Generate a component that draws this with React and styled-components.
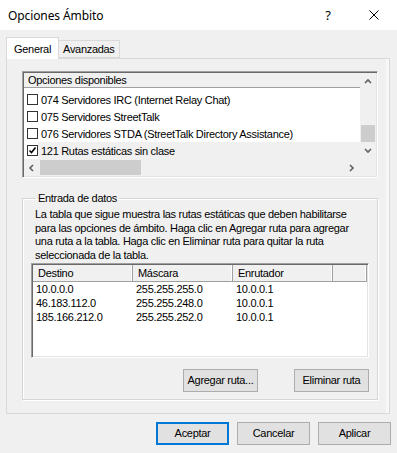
import React from 'react';
import styled, { createGlobalStyle } from 'styled-components';

const GlobalStyle = createGlobalStyle`
  html, body {
    margin: 0;
    padding: 0;
    background: #f0f0f0;
  }
  body {
    font-family: "Liberation Sans", Arial, sans-serif;
    font-size: 11px;
    letter-spacing: -0.3px;
    color: #000;
  }
`;

const Window = styled.div`
  width: 397px;
  height: 453px;
  background: #f0f0f0;
  display: flex;
  flex-direction: column;
  overflow: hidden;
`;

const TitleBar = styled.div`
  height: 30px;
  background: #fff;
  display: flex;
  align-items: center;
  justify-content: space-between;
  padding-left: 8px;
`;

const Title = styled.div`
  font-family: "Noto Sans", "Open Sans", sans-serif;
  font-size: 12px;
  letter-spacing: -0.1px;
`;

const TitleButtons = styled.div`
  display: flex;
  height: 100%;
`;

const TitleButton = styled.div`
  width: 46px;
  height: 100%;
  display: flex;
  align-items: center;
  justify-content: center;
  font-family: "Noto Sans", sans-serif;
  font-size: 13px;
`;

const Body = styled.div`
  flex: 1;
  padding: 7px 7px 0 6px;
  display: flex;
  flex-direction: column;
`;

const Tabs = styled.div`
  display: flex;
  align-items: flex-end;
  height: 21px;
  position: relative;
  z-index: 1;
`;

const Tab = styled.div`
  height: ${p => (p.$active ? '22px' : '18px')};
  padding: 0 ${p => (p.$active ? '7px' : '4px')};
  margin-bottom: ${p => (p.$active ? '-1px' : '0')};
  background: ${p => (p.$active ? '#fff' : '#f0f0f0')};
  border: 1px solid #d9d9d9;
  border-bottom: ${p => (p.$active ? 'none' : '1px solid #d9d9d9')};
  border-left: ${p => (p.$active ? '1px solid #d9d9d9' : 'none')};
  display: flex;
  align-items: center;
  box-sizing: border-box;
`;

const Panel = styled.div`
  border: 1px solid #d9d9d9;
  background: #f0f0f0;
  padding: 12px 11px 13px 15px;
  box-shadow: inset -3px 0 0 #f7f7f7;
`;

const ListBox = styled.div`
  width: 356px;
  height: 107px;
  box-sizing: border-box;
  border: 1px solid;
  border-color: #a0a0a0 #fff #fff #a0a0a0;
  box-shadow: inset 1px 1px 0 #696969, inset -1px -1px 0 #e3e3e3;
  padding: 1px;
  display: grid;
  grid-template-columns: 1fr 16px;
  grid-template-rows: 1fr 17px;
  background: #fff;
`;

const ListMain = styled.div`
  display: flex;
  flex-direction: column;
  overflow: hidden;
`;

const ListHeader = styled.div`
  height: 15px;
  border-bottom: 1px solid #a0a0a0;
  background: #f0f0f0;
  padding-left: 4px;
  display: flex;
  align-items: center;
  white-space: nowrap;
`;

const Items = styled.div`
  padding-top: 3px;
  flex: 1;
`;

const Item = styled.div`
  height: 17px;
  display: flex;
  align-items: center;
  padding-left: 3px;
  white-space: nowrap;
`;

const ItemLabel = styled.span`
  flex: 1;
  height: 100%;
  display: flex;
  align-items: center;
  padding-left: 3px;
  background: ${p => (p.$selected ? '#f0f0f0' : 'transparent')};
`;

const Check = styled.span`
  width: 11px;
  height: 11px;
  box-sizing: border-box;
  border: 1px solid #333;
  background: #fff;
  display: flex;
  align-items: center;
  justify-content: center;
  flex: none;
`;

const VScroll = styled.div`
  background: #f0f0f0;
  display: flex;
  flex-direction: column;
  align-items: center;
`;

const ScrollArrow = styled.div`
  width: 100%;
  height: 17px;
  display: flex;
  align-items: center;
  justify-content: center;
  flex: none;
`;

const VTrack = styled.div`
  flex: 1;
  width: 100%;
  display: flex;
  flex-direction: column;
  justify-content: flex-end;
`;

const VThumb = styled.div`
  height: 17px;
  background: #cdcdcd;
  margin: 0 1px;
`;

const HScroll = styled.div`
  background: #f0f0f0;
  display: flex;
  align-items: stretch;
`;

const HArrow = styled.div`
  width: 16px;
  display: flex;
  align-items: center;
  justify-content: center;
  flex: none;
`;

const HTrack = styled.div`
  flex: 1;
  display: flex;
  align-items: stretch;
  padding: 1px 0;
`;

const HThumb = styled.div`
  width: 101px;
  background: #cdcdcd;
`;

const Corner = styled.div`
  background: #f0f0f0;
`;

const GroupBox = styled.fieldset`
  margin: 14px 0 0 0;
  width: 356px;
  box-sizing: border-box;
  border: 1px solid #d5d5d5;
  border-radius: 0;
  padding: 0 8px 7px 8px;
  box-shadow: 1px 1px 0 #fff, inset 1px 1px 0 #fff;
`;

const Legend = styled.legend`
  margin-left: 5px;
  padding: 0 2px;
  line-height: 13px;
`;

const Desc = styled.div`
  margin: 3px 0 0 4px;
  line-height: 13.7px;
  white-space: nowrap;
`;

const Table = styled.div`
  margin-top: 0;
  height: 95px;
  box-sizing: border-box;
  border: 1px solid;
  border-color: #a0a0a0 #fff #fff #a0a0a0;
  box-shadow: inset 1px 1px 0 #696969, inset -1px -1px 0 #e3e3e3;
  padding: 1px;
  background: #fff;
`;

const Cols = styled.div`
  display: grid;
  grid-template-columns: 100px 100px 100px 1fr;
`;

const HeadCell = styled.div`
  height: 16px;
  background: #f0f0f0;
  border-bottom: 1px solid #a0a0a0;
  border-right: 1px solid #a0a0a0;
  box-shadow: inset -1px 0 0 #fff;
  padding-left: 5px;
  display: flex;
  align-items: center;
`;

const Cell = styled.div`
  height: 14px;
  padding-left: 3px;
  display: flex;
  align-items: center;
  white-space: nowrap;
`;

const ButtonRow = styled.div`
  display: flex;
  justify-content: flex-end;
  gap: 36px;
  margin-top: 11px;
`;

const Button = styled.div`
  width: ${p => p.$w || 75}px;
  height: 23px;
  box-sizing: border-box;
  background: #e1e1e1;
  border: ${p => (p.$default ? '2px solid #0078d7' : '1px solid #adadad')};
  display: flex;
  align-items: center;
  justify-content: center;
`;

const Footer = styled.div`
  display: flex;
  justify-content: flex-end;
  gap: 8px;
  margin-top: 8px;
  margin-right: -1px;
`;

const Chevron = ({ dir }) => {
  const pts = {
    up: '1,5 4,2 7,5',
    down: '1,2 4,5 7,2',
    left: '5,1 2,4 5,7',
    right: '2,1 5,4 2,7',
  }[dir];
  return (
    <svg width="8" height="8" viewBox="0 0 8 8">
      <polyline points={pts} fill="none" stroke="#606060" strokeWidth="1.6" />
    </svg>
  );
};

const options = [
  { label: '074 Servidores IRC (Internet Relay Chat)' },
  { label: '075 Servidores StreetTalk' },
  { label: '076 Servidores STDA (StreetTalk Directory Assistance)' },
  { label: '121 Rutas estáticas sin clase', checked: true, selected: true },
];

const routes = [
  ['10.0.0.0', '255.255.255.0', '10.0.0.1'],
  ['46.183.112.0', '255.255.248.0', '10.0.0.1'],
  ['185.166.212.0', '255.255.252.0', '10.0.0.1'],
];

export default function App() {
  return (
    <>
      <GlobalStyle />
      <Window>
        <TitleBar>
          <Title>Opciones Ámbito</Title>
          <TitleButtons>
            <TitleButton>?</TitleButton>
            <TitleButton>
              <svg width="10" height="10" viewBox="0 0 10 10">
                <path d="M0.5 0.5 L9.5 9.5 M9.5 0.5 L0.5 9.5" stroke="#000" strokeWidth="1" />
              </svg>
            </TitleButton>
          </TitleButtons>
        </TitleBar>
        <Body>
          <Tabs>
            <Tab $active>General</Tab>
            <Tab>Avanzadas</Tab>
          </Tabs>
          <Panel>
            <ListBox>
              <ListMain>
                <ListHeader>Opciones disponibles</ListHeader>
                <Items>
                  {options.map((o, i) => (
                    <Item key={i}>
                      <Check>
                        {o.checked && (
                          <svg width="9" height="9" viewBox="0 0 9 9">
                            <polyline points="1.5,4.5 3.5,6.5 7.5,1.5" fill="none" stroke="#000" strokeWidth="1.6" />
                          </svg>
                        )}
                      </Check>
                      <ItemLabel $selected={o.selected}>{o.label}</ItemLabel>
                    </Item>
                  ))}
                </Items>
              </ListMain>
              <VScroll>
                <ScrollArrow><Chevron dir="up" /></ScrollArrow>
                <VTrack><VThumb /></VTrack>
                <ScrollArrow><Chevron dir="down" /></ScrollArrow>
              </VScroll>
              <HScroll>
                <HArrow><Chevron dir="left" /></HArrow>
                <HTrack><HThumb /></HTrack>
                <HArrow><Chevron dir="right" /></HArrow>
              </HScroll>
              <Corner />
            </ListBox>
            <GroupBox>
              <Legend>Entrada de datos</Legend>
              <Desc>
                La tabla que sigue muestra las rutas estáticas que deben habilitarse<br />
                para las opciones de ámbito. Haga clic en Agregar ruta para agregar<br />
                una ruta a la tabla. Haga clic en Eliminar ruta para quitar la ruta<br />
                seleccionada de la tabla.
              </Desc>
              <Table>
                <Cols>
                  <HeadCell>Destino</HeadCell>
                  <HeadCell>Máscara</HeadCell>
                  <HeadCell>Enrutador</HeadCell>
                  <HeadCell />
                  {routes.map((r, i) => (
                    <React.Fragment key={i}>
                      <Cell>{r[0]}</Cell>
                      <Cell>{r[1]}</Cell>
                      <Cell>{r[2]}</Cell>
                      <Cell />
                    </React.Fragment>
                  ))}
                </Cols>
              </Table>
              <ButtonRow>
                <Button>Agregar ruta...</Button>
                <Button>Eliminar ruta</Button>
              </ButtonRow>
            </GroupBox>
          </Panel>
          <Footer>
            <Button $default $w={73}>Aceptar</Button>
            <Button $w={73}>Cancelar</Button>
            <Button $w={73}>Aplicar</Button>
          </Footer>
        </Body>
      </Window>
    </>
  );
}
